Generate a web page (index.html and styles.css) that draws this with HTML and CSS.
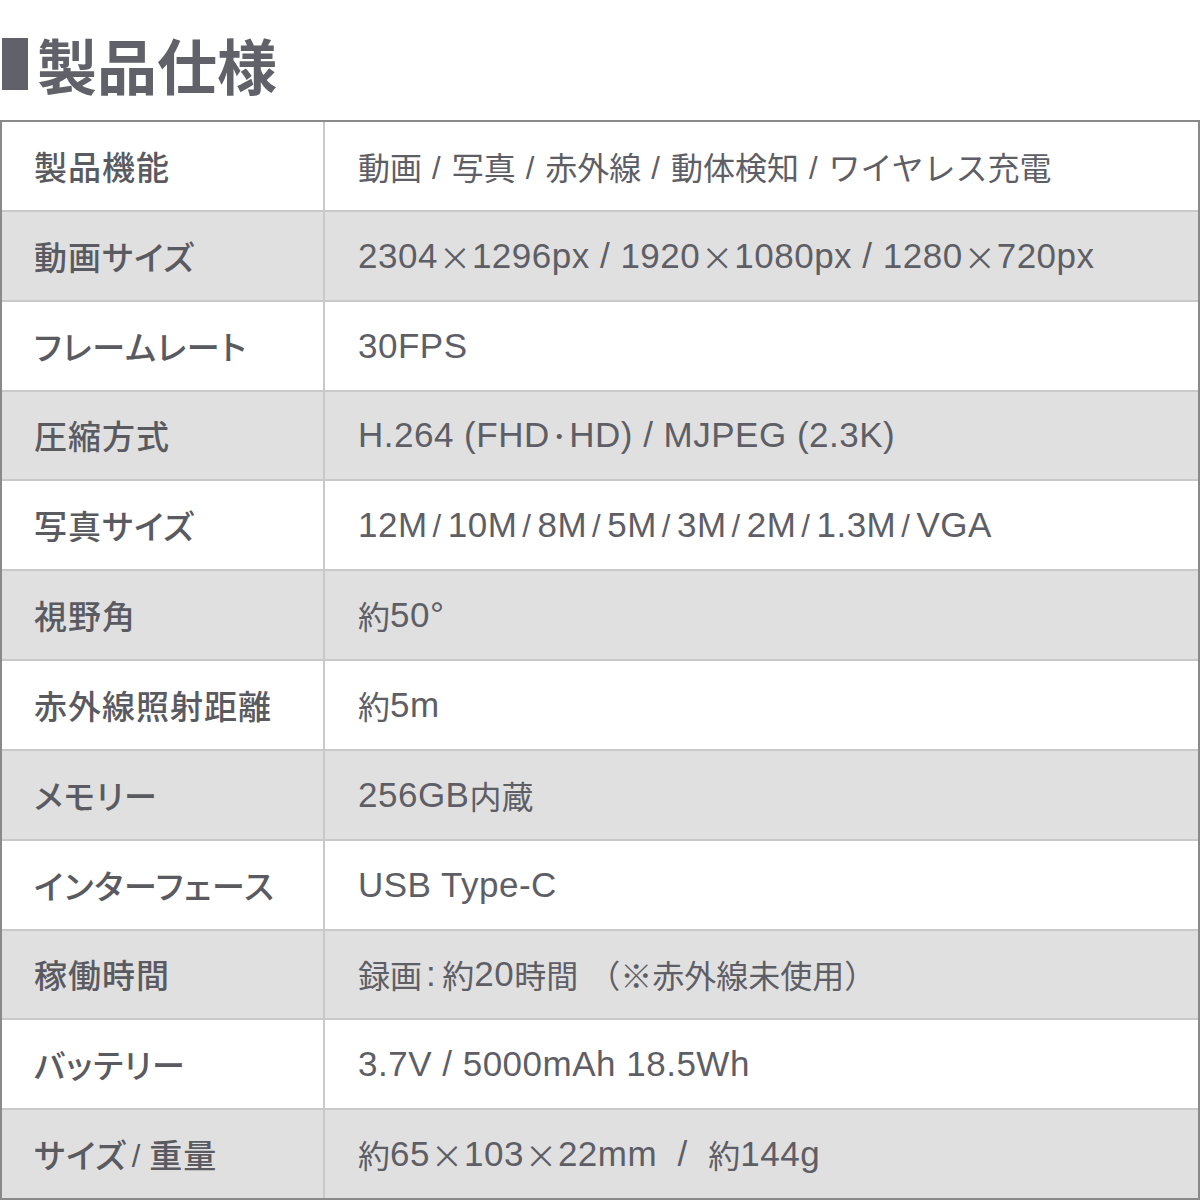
FILE: index.html
```html
<!DOCTYPE html>
<html lang="ja">
<head>
<meta charset="utf-8">
<link rel="stylesheet" href="styles.css">
</head>
<body>
<div class="title"><span class="bar"></span><h1>製品仕様</h1></div>
<div class="spec">
  <div class="cell label">製品機能</div><div class="cell value ja">動画<span class="sl">/</span>写真<span class="sl">/</span>赤外線<span class="sl">/</span>動体検知<span class="sl">/</span>ワイヤレス充電</div>
  <div class="cell label alt">動画サイズ</div><div class="cell value alt">2304<span class="x">×</span>1296px / 1920<span class="x">×</span>1080px / 1280<span class="x">×</span>720px</div>
  <div class="cell label">フレームレート</div><div class="cell value">30FPS</div>
  <div class="cell label alt">圧縮方式</div><div class="cell value alt">H.264 (FHD<span class="dot">･</span>HD) / MJPEG (2.3K)</div>
  <div class="cell label">写真サイズ</div><div class="cell value">12M<span class="sl">/</span>10M<span class="sl">/</span>8M<span class="sl">/</span>5M<span class="sl">/</span>3M<span class="sl">/</span>2M<span class="sl">/</span>1.3M<span class="sl">/</span>VGA</div>
  <div class="cell label alt">視野角</div><div class="cell value alt"><span class="ja">約</span>50°</div>
  <div class="cell label">赤外線照射距離</div><div class="cell value"><span class="ja">約</span>5m</div>
  <div class="cell label alt">メモリー</div><div class="cell value alt">256GB<span class="ja">内蔵</span></div>
  <div class="cell label">インターフェース</div><div class="cell value">USB Type-C</div>
  <div class="cell label alt">稼働時間</div><div class="cell value alt"><span class="ja">録画</span><span class="colon">:</span><span class="ja">約</span>20<span class="ja">時間</span><span class="ja paren">（※赤外線未使用）</span></div>
  <div class="cell label">バッテリー</div><div class="cell value">3.7V / 5000mAh 18.5Wh</div>
  <div class="cell label alt">サイズ<span class="sl">/</span>重量</div><div class="cell value alt"><span class="ja">約</span>65<span class="x">×</span>103<span class="x">×</span>22mm &nbsp;/ &nbsp;<span class="ja">約</span>144g</div>
</div>
</body>
</html>
```

FILE: styles.css
```css
html, body {
  margin: 0;
  padding: 0;
  background: #ffffff;
}
body {
  width: 1200px;
  font-family: "Liberation Sans", "Noto Sans CJK JP", sans-serif;
  color: #58585f;
}
.title {
  height: 112px;
  padding-top: 8px;
  display: flex;
  align-items: center;
  gap: 9px;
}
.bar {
  display: block;
  width: 26px;
  height: 52px;
  margin-left: 2px;
  background: #616169;
}
.title h1 {
  margin: 0;
  font-family: "Noto Sans CJK JP", sans-serif;
  font-size: 60px;
  font-weight: 700;
  color: #616169;
  line-height: 1;
}
.spec {
  box-sizing: border-box;
  height: 1080px;
  border: 2px solid #8a8a8a;
  display: grid;
  grid-template-columns: 321px 1fr;
  grid-template-rows: repeat(12, 1fr);
  gap: 2px;
  background: #c9c9c9;
}
.cell {
  display: flex;
  align-items: center;
  background: #ffffff;
  white-space: pre;
}
.cell.alt {
  background: #e0e0e0;
}
.label {
  padding-left: 32px;
  font-family: "Noto Sans CJK JP", sans-serif;
  font-size: 33px;
  font-weight: 500;
  letter-spacing: 1px;
  color: #5a5a61;
  font-feature-settings: "palt" 1;
}
.label .sl {
  font-family: "Liberation Sans", sans-serif;
  font-weight: 400;
  font-size: 31px;
  margin: 0 8px 0 5px;
  position: relative;
  top: 3px;
}
.value {
  padding-left: 33px;
  font-size: 35px;
  font-weight: 400;
  letter-spacing: 0.5px;
  color: #5e5e66;
}
.value.ja,
.value .ja {
  font-family: "Noto Sans CJK JP", sans-serif;
  font-size: 32px;
  letter-spacing: 0;
}
.value .sl {
  font-family: "Liberation Sans", sans-serif;
  font-size: 31px;
  margin: 0 6px 0 5px;
  position: relative;
  top: 2px;
}
.value.ja .sl {
  margin: 0 11px 0 10px;
  top: 3px;
}
.value .x {
  font-family: "Noto Sans CJK JP", sans-serif;
  font-size: 32px;
  letter-spacing: 0;
  margin: 0 1px;
}
.value .dot {
  font-family: "Noto Sans CJK JP", sans-serif;
  font-size: 30px;
  margin: 0 2px;
}
.value .colon {
  margin: 0 6px 0 4px;
}
.value .paren {
  margin-left: 10px;
}
```
